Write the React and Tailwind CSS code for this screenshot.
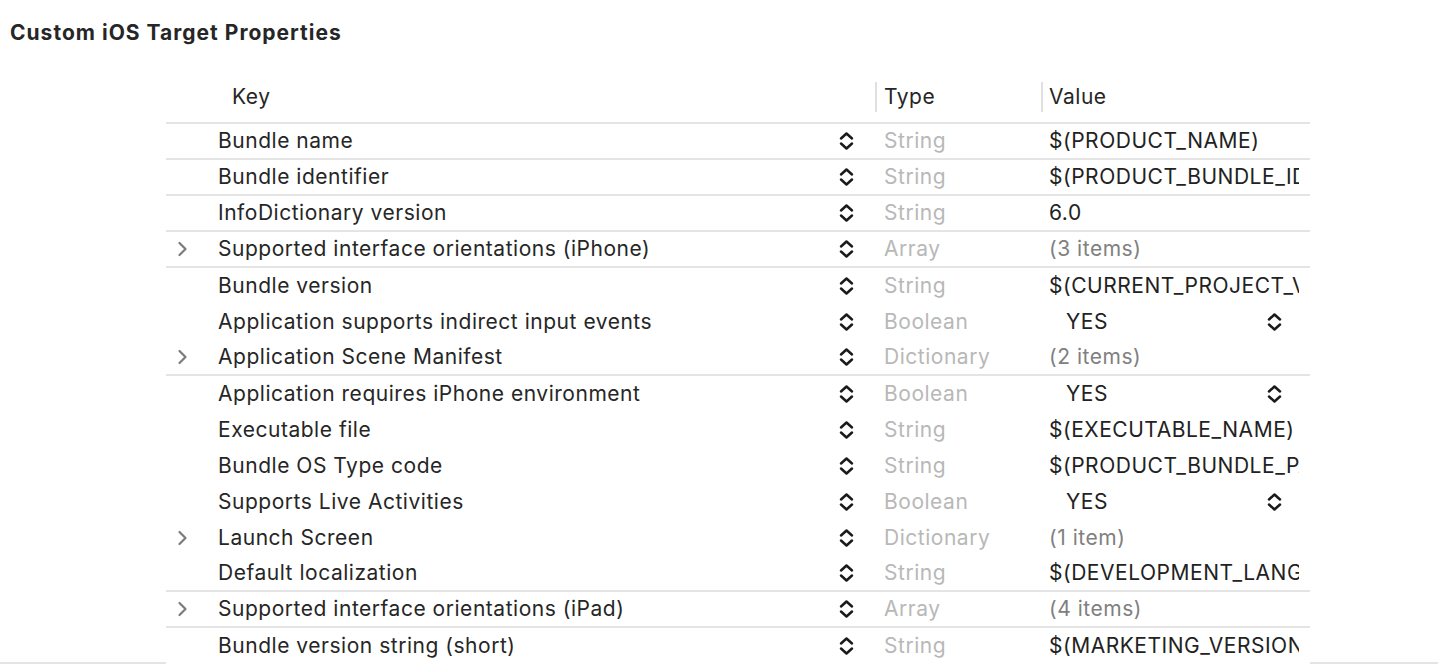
import React from 'react';

const rows = [
  { key: 'Bundle name', type: 'String', value: '$(PRODUCT_NAME)', line: true },
  { key: 'Bundle identifier', type: 'String', value: '$(PRODUCT_BUNDLE_IDENTIFIER)', line: true },
  { key: 'InfoDictionary version', type: 'String', value: '6.0', line: true },
  { key: 'Supported interface orientations (iPhone)', type: 'Array', value: '(3 items)', group: true, line: true },
  { key: 'Bundle version', type: 'String', value: '$(CURRENT_PROJECT_VERSION)' },
  { key: 'Application supports indirect input events', type: 'Boolean', value: 'YES', bool: true },
  { key: 'Application Scene Manifest', type: 'Dictionary', value: '(2 items)', group: true, line: true },
  { key: 'Application requires iPhone environment', type: 'Boolean', value: 'YES', bool: true },
  { key: 'Executable file', type: 'String', value: '$(EXECUTABLE_NAME)' },
  { key: 'Bundle OS Type code', type: 'String', value: '$(PRODUCT_BUNDLE_PACKAGE_TYPE)' },
  { key: 'Supports Live Activities', type: 'Boolean', value: 'YES', bool: true },
  { key: 'Launch Screen', type: 'Dictionary', value: '(1 item)', group: true },
  { key: 'Default localization', type: 'String', value: '$(DEVELOPMENT_LANGUAGE)', line: true },
  { key: 'Supported interface orientations (iPad)', type: 'Array', value: '(4 items)', group: true, line: true },
  { key: 'Bundle version string (short)', type: 'String', value: '$(MARKETING_VERSION)' },
];

// up/down popup arrows
const Stepper = () => (
  <svg width="15" height="22" viewBox="0 0 15 22" fill="none" stroke="#1a1a1a" strokeWidth="2.5" strokeLinecap="round" strokeLinejoin="round">
    <path d="M2 8.5 L7.5 3.5 L13 8.5" />
    <path d="M2 13.5 L7.5 18.5 L13 13.5" />
  </svg>
);

const Disclosure = () => (
  <svg width="11" height="16" viewBox="0 0 11 16" fill="none" stroke="#7b7b7b" strokeWidth="2.2" strokeLinecap="round" strokeLinejoin="round">
    <path d="M2.5 2 L8.5 8 L2.5 14" />
  </svg>
);

const Row = ({ row }) => (
  <div
    className={`grid grid-cols-[52px_618px_39px_166px_269px] h-[36px] items-center text-[21px] tracking-[0.025em] ${
      row.line ? 'border-b-2 border-[#e4e4e4]' : ''
    }`}
  >
    <div className="flex items-center pl-[11px]">{row.group && <Disclosure />}</div>
    <div className="text-[#262626] whitespace-nowrap">{row.key}</div>
    <div className="flex items-center pl-[3px]">
      <Stepper />
    </div>
    <div className="pl-[9px] text-[#b8b8b8] whitespace-nowrap">{row.type}</div>
    {row.bool ? (
      <div className="flex items-center justify-between pl-[25px] pr-[28px]">
        <span className="text-[#222]">{row.value}</span>
        <Stepper />
      </div>
    ) : (
      <div
        className={`pl-[8px] pr-[11px] overflow-hidden whitespace-nowrap ${
          row.group ? 'text-[#808080]' : 'text-[#222]'
        }`}
      >
        <div className="overflow-hidden">{row.value}</div>
      </div>
    )}
  </div>
);

export default function App() {
  return (
    <div className="h-[664px] w-full bg-white overflow-hidden flex flex-col" style={{ fontFamily: 'Inter, "Noto Sans", sans-serif' }}>
      <div className="pt-[20px] pl-[10px] h-[44px] text-[21px] leading-[26px] font-bold tracking-[0.048em] text-[#262626]">
        Custom iOS Target Properties
      </div>
      <div className="flex flex-1">
        <div className="w-[166px] border-b-2 border-[#e4e4e4]" />
        <div className="w-[1144px] flex flex-col">
          <div className="grid grid-cols-[52px_657px_166px_269px] h-[80px] items-end pb-[10px] border-b-2 border-[#e4e4e4] text-[21px] tracking-[0.025em] text-[#262626]">
            <div />
            <div className="h-[30px] flex items-center pl-[14px]">Key</div>
            <div className="h-[30px] flex items-center pl-[7px] border-l-2 border-[#e0e0e0]">Type</div>
            <div className="h-[30px] flex items-center pl-[6px] border-l-2 border-[#e0e0e0]">Value</div>
          </div>
          {rows.map((r) => (
            <Row key={r.key} row={r} />
          ))}
        </div>
        <div className="flex-1 border-b-2 border-[#e4e4e4]" />
      </div>
    </div>
  );
}
